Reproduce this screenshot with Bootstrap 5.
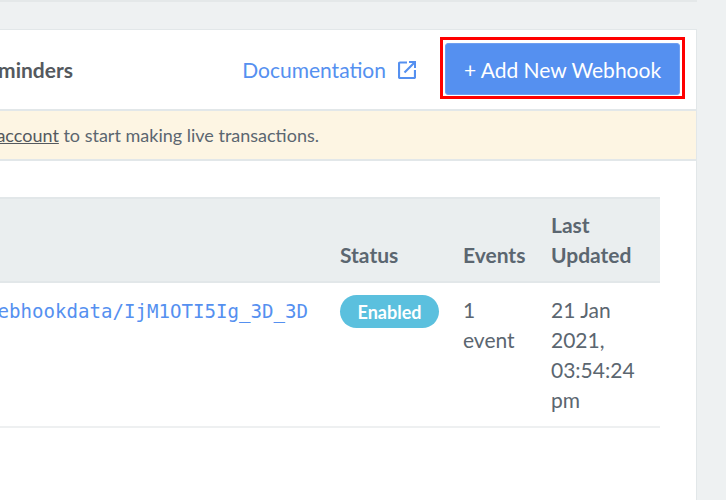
<!DOCTYPE html>
<html lang="en">
<head>
<meta charset="utf-8">
<title>Webhooks</title>
<link href="https://cdn.jsdelivr.net/npm/bootstrap@5.3.0/dist/css/bootstrap.min.css" rel="stylesheet">
<style>
html,body{height:500px;overflow:hidden}
body{background:#eef1f2;font-family:"Lato",sans-serif;color:#5b6670;font-size:18px;line-height:30px}
.page-shell{border-top:2px solid #e4e8e9;padding-top:27px;width:1300px;margin-left:-603px}
.hook-card{width:1300px;margin:0;background:#fff;border:1px solid #e2e7e9;border-bottom:0;border-radius:0;height:480px}
.hook-head{height:81px;border-bottom:2px solid #e2e7e9;padding-right:11px}
.hook-title{font-size:21px;font-weight:700;color:#54595e;margin:0;width:675px;text-align:right;white-space:nowrap}
.doc-link{color:#5590f0;font-size:21px;text-decoration:none;margin-right:24px;display:flex;align-items:center;gap:12px}
.add-frame{border:3px solid #f00;padding:3px 2px 1px;margin-bottom:4px}
.add-btn{background:#5590f0;border:1px solid #6f9ff0;color:#fff;font-size:21px;width:235px;height:52px;padding:2px 0 0;border-radius:3px;line-height:1}
.note-bar{height:50px;background:#fdf5e3;border:0;border-bottom:2px solid #e2e7e9;border-radius:0;margin:0;padding:0;color:#5b6670;font-size:18px;display:flex;align-items:center}
.note-bar span{display:block;width:921px;text-align:right;white-space:nowrap}
.note-bar a{color:#54595e}
.hook-body{padding:36px 36px 0 0}
.hook-table{width:1262px;margin:0;table-layout:fixed;color:#5b6670}
.hook-table thead th{background:#eaeeef;color:#5b6670;font-size:21px;font-weight:700;line-height:30px;border-top:2px solid #e2e7e9;border-bottom:2px solid #e2e7e9;padding:11px 0 11px 0;vertical-align:bottom}
.hook-table td{font-size:21px;line-height:30px;padding:12px 0 11px 0;border-bottom:2px solid #eef0f1;vertical-align:top}
.col-url{width:942px}.col-status{width:123px}.col-events{width:88px}.col-upd{width:109px}
.hook-table td.cell-events{padding-right:25px}
.hook-table td.cell-upd{padding-right:20px}
.url-text{font-family:"DejaVu Sans Mono",monospace;font-size:19.1px;color:#5590f0;width:910px;padding-top:2px;text-align:right;display:block;white-space:nowrap}
.state-pill{background:#5bc0de;color:#fff;font-size:18px;font-weight:700;border-radius:17px;width:99px;height:33px;display:flex;align-items:center;justify-content:center;line-height:1}
</style>
</head>
<body>
<div class="page-shell">
  <div class="card hook-card">
    <div class="hook-head d-flex align-items-center justify-content-between">
      <h5 class="hook-title">Webhook Reminders</h5>
      <div class="d-flex align-items-center">
        <a class="doc-link" href="#">Documentation <svg width="18" height="18" viewBox="0 0 18 18" fill="none" stroke="#5590f0" stroke-width="2.200"><path d="M9 1.500H2a1 1 0 0 0-1 1V16a1 1 0 0 0 1 1h14a1 1 0 0 0 1-1V9"/><path d="M6.500 11.500L16 2"/><path d="M11 1h6v6" stroke-width="2"/></svg></a>
        <div class="add-frame"><button class="btn add-btn" type="button">+ Add New Webhook</button></div>
      </div>
    </div>
    <div class="alert note-bar" role="alert"><span>Activate your <a href="#">account</a> to start making live transactions.</span></div>
    <div class="hook-body">
      <table class="table hook-table">
        <thead><tr><th class="col-url"></th><th class="col-status">Status</th><th class="col-events">Events</th><th class="col-upd">Last Updated</th></tr></thead>
        <tbody><tr>
          <td><span class="url-text">https://example.com/webhookdata/IjM1OTI5Ig_3D_3D</span></td>
          <td><span class="state-pill">Enabled</span></td>
          <td class="cell-events">1 event</td>
          <td class="cell-upd">21 Jan 2021, 03:54:24 pm</td>
        </tr></tbody>
      </table>
    </div>
  </div>
</div>
</body>
</html>
